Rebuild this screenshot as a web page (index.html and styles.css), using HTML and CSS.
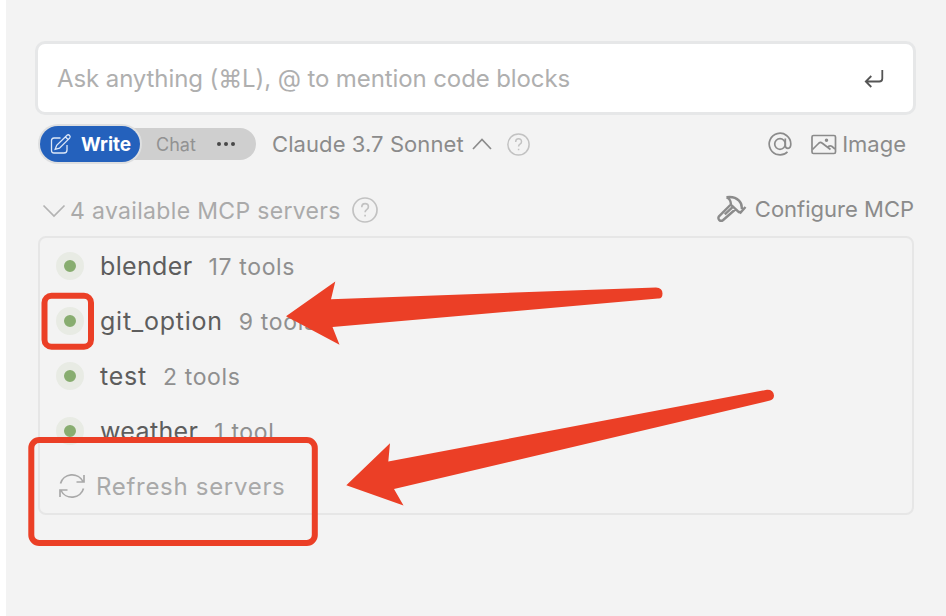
FILE: index.html
```html
<!DOCTYPE html>
<html lang="en">
<head>
<meta charset="utf-8">
<title>MCP servers</title>
<link rel="stylesheet" href="styles.css">
</head>
<body>
<main class="panel">
  <div class="prompt">
    <span class="prompt-text">Ask anything (⌘L), @ to mention code blocks</span>
    <svg class="enter" viewBox="0 0 20 20" width="20" height="20"><path d="M18.300 1v8.500q0 3-3 3H2M7.300 7 1.800 12.500l5.500 5.500"/></svg>
  </div>

  <div class="toolbar">
    <div class="modes">
      <div class="mode-write">
        <svg class="pencil" viewBox="0 0 22 22" width="22" height="22"><path d="M10.500 5H4Q1.500 5 1.500 7.500v10Q1.500 20 4 20h10q3 0 3-3v-5"/><path d="m5.200 16.300 1.500-4L17 2.200q1.300-1 2.600.2 1.200 1.300 0 2.700L9.500 15.100zM15.300 3.800l2.700 2.700"/></svg>
        <span>Write</span>
      </div>
      <span class="mode-chat">Chat</span>
      <span class="dots"><i></i><i></i><i></i></span>
    </div>
    <span class="model">Claude 3.7 Sonnet</span>
    <svg class="caret" viewBox="0 0 20 12" width="20" height="12"><path d="m1 11 9-9.500 9 9.500"/></svg>
    <svg class="help help-small" viewBox="0 0 26 26" width="23" height="23"><circle cx="13" cy="13" r="12"/><path d="M9.800 10.200q0-3.600 3.300-3.600t3.300 3.200q0 1.700-1.700 2.800-1.600 1-1.600 2.700M13.100 17.800v1.700"/></svg>
    <svg class="at" viewBox="0 0 24 24" width="24" height="24"><circle cx="12" cy="12" r="5.300"/><path d="M17.300 6.500v7q0 2.800 2.700 2.800 2.800-.2 2.800-4.300A10.800 10.800 0 1 0 19.500 19.800"/></svg>
    <svg class="picture" viewBox="0 0 26 21" width="26" height="21"><rect x="1" y="1.500" width="23.500" height="18" rx="1.500"/><path d="M1.500 15.500 8 9q1.500-1.300 3 0l8.500 6.500M16.500 13.500l1.200-1.200q1.500-1 3 0l3.300 2.700"/><circle class="sun" cx="15.500" cy="6.300" r=".9"/></svg>
    <span class="image">Image</span>
  </div>

  <div class="heading">
    <svg class="chevron" viewBox="0 0 24 14" width="24" height="14"><path d="m1.500 1.500 10.500 10.500 10.500-10.500"/></svg>
    <span class="count">4 available MCP servers</span>
    <svg class="help" viewBox="0 0 26 26" width="26" height="26"><circle cx="13" cy="13" r="12"/><path d="M9.800 10.200q0-3.600 3.300-3.600t3.300 3.200q0 1.700-1.700 2.800-1.600 1-1.600 2.700M13.100 17.800v1.700"/></svg>
    <div class="configure">
      <svg class="hammer" viewBox="0 0 30 28" width="30" height="28"><path d="M9.500 2.200q8-1.200 12.500 3.500 3 3 2.800 7.500l1.500 1M28.500 12l-5.700 6.500M9.500 2.200q4.800 2.500 4.300 7.300l7.500 7.200q1 1 2.500-.2M13.800 9.500 2 21.300q-1.300 1.800.2 3.700 1.900 1.600 3.700.2L18.800 14M7.800 19.300l7.500-7"/></svg>
      <span>Configure MCP</span>
    </div>
  </div>

  <div class="servers">
    <div class="server"><i class="status"></i><span class="name">blender</span><span class="tools">17 tools</span></div>
    <div class="server"><i class="status"></i><span class="name name-wide">git_option</span><span class="tools">9 tools</span></div>
    <div class="server"><i class="status"></i><span class="name name-wide">test</span><span class="tools">2 tools</span></div>
    <div class="server"><i class="status"></i><span class="name">weather</span><span class="tools">1 tool</span></div>
    <div class="server refresh">
      <svg class="sync" viewBox="0 0 28 26" width="28" height="26"><path d="M2.500 10.500A12 11.500 0 0 1 25 8.500M26 2v7h-7.500M25.500 15.500A12 11.500 0 0 1 3 17.500M2 24v-7h7.500"/></svg>
      <span>Refresh servers</span>
    </div>
  </div>
</main>
<svg class="marks" viewBox="0 0 946 616" width="946" height="616">
  <rect x="44.500" y="295.700" width="46.500" height="51" rx="7"/>
  <rect x="31.300" y="440" width="283.500" height="103" rx="8"/>
  <path d="M286 316.300 335.300 281.500 331 299.300 656 287.500Q662.500 288 662.500 293.500T658 298.500L332.500 327 339.500 344.700Z"/>
  <path d="M346.300 485.200 390 443.300 388.300 461.500 767 389.700Q773.500 389.500 774 395.500 774 399.500 770 400.500L394 489 403.500 505.500Z"/>
</svg>
</body>
</html>
```
FILE: styles.css
```css
* { box-sizing: border-box; }
body {
  margin: 0;
  width: 946px;
  height: 616px;
  overflow: hidden;
  background: #fff;
  font-family: Inter, "Liberation Sans", sans-serif;
  color: #8b8b8b;
  position: relative;
}
svg { flex: none; fill: none; stroke: currentColor; stroke-width: 1.7; }
span { white-space: nowrap; }
.panel { margin: 0 0 0 6px; height: 616px; padding: 41px 30px 0 29px; background: #f3f3f3; }
.prompt {
  height: 74px;
  border: 3px solid #e6e7e8;
  border-radius: 10px;
  background: #fff;
  display: flex;
  align-items: center;
  justify-content: space-between;
  padding: 0 29px 0 19px;
}
.prompt-text { font-size: 24px; letter-spacing: -.1px; color: #afafaf; }
.enter { color: #555; stroke-width: 1.8; margin-top: 1px; }
.toolbar { display: flex; align-items: center; height: 58px; padding: 0 10px 0 5px; }
.modes {
  display: flex;
  align-items: center;
  width: 216px;
  height: 32px;
  border-radius: 16px;
  background: #cfcfcf;
}
.mode-write {
  display: flex;
  align-items: center;
  gap: 9px;
  width: 100px;
  height: 36px;
  padding-left: 10px;
  border-radius: 18px;
  background: #2461bc;
  box-shadow: 0 0 0 2px #dedfe0;
  color: #fff;
  font-size: 19px;
  font-weight: 700;
}
.pencil { stroke-width: 1.3; color: #dce7f7; }
.mode-chat { margin-left: 16px; font-size: 18px; color: #929292; }
.dots { display: flex; gap: 3px; margin-left: 21px; }
.dots i { width: 4px; height: 4px; border-radius: 50%; background: #484848; }
.model { margin-left: 16px; font-size: 22px; letter-spacing: .08px; }
.caret { margin-left: 8px; }
.help { color: #c2c2c2; stroke-width: 1.7; }
.help-small { margin-left: 15px; }
.at { margin-left: auto; }
.picture { margin-left: 19px; }
.sun { fill: currentColor; }
.image { margin-left: 5px; font-size: 22px; }
.heading { display: flex; align-items: center; height: 63px; padding: 12px 2px 0 7px; }
.chevron { color: #b3b3b3; }
.count { font-size: 23px; letter-spacing: .33px; color: #aaa; margin-left: 4px; }
.heading .help { margin: 0 0 2px 11px; }
.configure { display: flex; align-items: center; gap: 8px; margin-left: auto; padding-bottom: 3px; font-size: 22px; }
.hammer { stroke-width: 2.4; }
.servers {
  width: 876px;
  height: 279px;
  margin-left: 3px;
  border: 2px solid #e6e6e6;
  border-radius: 8px;
}
.server { display: flex; align-items: center; height: 55px; padding-left: 16px; }
.status { width: 28px; height: 28px; border-radius: 50%; border: 8px solid #e8ebe4; background: #88ad70; }
.name { font-size: 25px; letter-spacing: .35px; color: #5d5d5d; margin-left: 16px; }
.name-wide { letter-spacing: .75px; }
.tools { font-size: 23px; letter-spacing: .65px; color: #8f8f8f; margin-left: 16px; padding-top: 2px; }
.refresh { font-size: 24px; letter-spacing: .7px; color: #a9a9a9; padding-left: 18px; gap: 10px; }
.refresh span { padding-top: 2px; }
.marks { position: absolute; left: 0; top: 0; fill: #eb3f26; stroke: none; }
.marks rect { fill: none; stroke: #eb3f26; stroke-width: 6; }
```
